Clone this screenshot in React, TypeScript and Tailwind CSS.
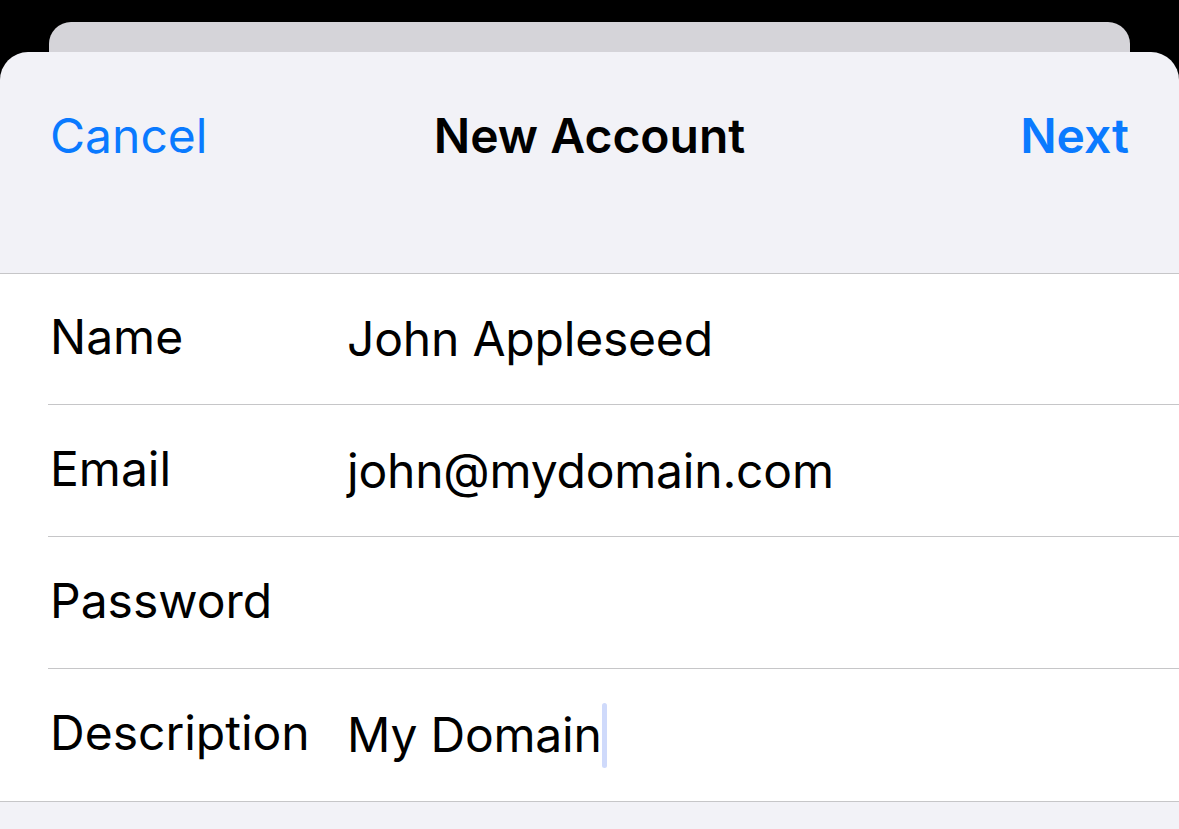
const rows = [
  { label: "Name", value: "John Appleseed" },
  { label: "Email", value: "john@mydomain.com" },
  { label: "Password", value: "" },
  { label: "Description", value: "My Domain", caret: true },
];

export default function App() {
  return (
    <div
      className="w-[1179px] h-[829px] bg-black overflow-hidden flex flex-col"
      style={{ fontFamily: "Inter, 'Liberation Sans', sans-serif" }}
    >
      {/* card stacked behind */}
      <div className="mt-[22px] mx-[49px] h-[30px] bg-[#d5d4d9] rounded-t-[22px] shrink-0" />

      <div className="flex-1 bg-[#f2f2f7] rounded-t-[28px] flex flex-col">
        <div className="h-[168px] px-[50px] grid grid-cols-[1fr_auto_1fr] items-center text-[48px]">
          <button className="justify-self-start text-[#0a7aff]">Cancel</button>
          <h1 className="font-semibold text-black">New Account</h1>
          <button className="justify-self-end font-semibold text-[#0a7aff]">Next</button>
        </div>
        <div className="h-[54px] border-b border-[#c6c6c8]" />

        <div className="bg-white border-b border-[#c6c6c8]">
          {rows.map((row, i) => (
            <div key={row.label} className="pl-[48px]">
              <div
                className={
                  "flex items-center text-[48px] text-black" +
                  (i === 0 ? " h-[131px]" : " h-[132px]") +
                  (i < rows.length - 1 ? " border-b border-[#c6c6c8]" : "")
                }
              >
                <span className="w-[299px] pl-[2px] -mt-[4px]">{row.label}</span>
                <span className="tracking-[-0.2px]">{row.value}</span>
                {row.caret && (
                  <span className="w-[5px] h-[65px] rounded-full bg-[#cfdafb]" />
                )}
              </div>
            </div>
          ))}
        </div>

        <div className="flex-1" />
      </div>
    </div>
  );
}
